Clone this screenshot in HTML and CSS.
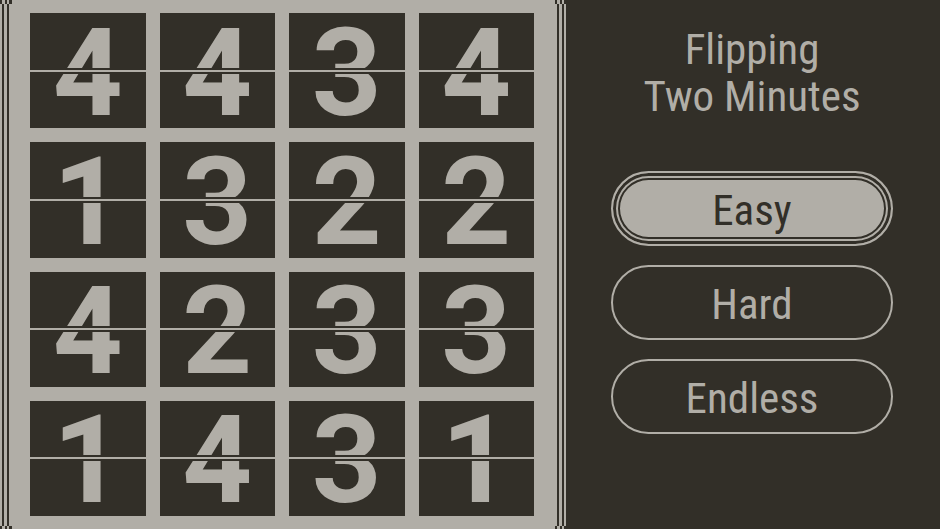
FILE: index.html
```html
<!DOCTYPE html>
<html lang="en">
<head>
    <meta charset="UTF-8">
    <meta name="viewport" content="width=device-width, initial-scale=1.0">
    <title>Flipping Two Minutes</title>
    <link rel="stylesheet" href="styles.css">
</head>
<body>
    <div class="game">
        <!-- Flip board -->
        <main class="board">
            <div class="tile">4</div>
            <div class="tile">4</div>
            <div class="tile">3</div>
            <div class="tile">4</div>

            <div class="tile">1</div>
            <div class="tile">3</div>
            <div class="tile">2</div>
            <div class="tile">2</div>

            <div class="tile">4</div>
            <div class="tile">2</div>
            <div class="tile">3</div>
            <div class="tile">3</div>

            <div class="tile">1</div>
            <div class="tile">4</div>
            <div class="tile">3</div>
            <div class="tile">1</div>
        </main>

        <!-- Title and mode menu -->
        <aside class="menu">
            <h1 class="title">Flipping<br>Two Minutes</h1>
            <div class="modes">
                <button type="button" class="mode selected">Easy</button>
                <button type="button" class="mode">Hard</button>
                <button type="button" class="mode">Endless</button>
            </div>
        </aside>
    </div>
</body>
</html>
```

FILE: styles.css
```css
:root {
    --light: #b1aea7;
    --dark: #322f28;
}

*,
*::after {
    box-sizing: border-box;
}

body {
    margin: 0;
    background: var(--dark);
    color: var(--light);
    font-family: "Roboto Condensed", "Open Sans Condensed", Lato, sans-serif;
}

.game {
    display: grid;
    grid-template-columns: minmax(0, 566fr) minmax(0, 374fr);
    min-height: 100vh;
}

/* Board, with two dark stripes down each side */
.board {
    --stripes: linear-gradient(to right, var(--dark) 2px, var(--light) 2px 5px, var(--dark) 5px 7px, var(--light) 7px);
    --ends: linear-gradient(to right, var(--dark) 2px, var(--light) 2px 5px, var(--dark) 5px 7px, var(--light) 7px 9px, var(--dark) 9px);
    display: grid;
    grid-template-columns: repeat(4, minmax(0, 1fr));
    grid-auto-rows: 1fr;
    gap: 14px;
    padding: 13px 32px 13px 30px;
    background:
        var(--ends) 0 0 / 12px 4px no-repeat,
        var(--ends) 0 100% / 12px 3px no-repeat,
        var(--ends) 100% 0 / 11px 4px no-repeat,
        var(--ends) 100% 100% / 11px 3px no-repeat,
        var(--stripes) 2px 0 / 9px 100% no-repeat,
        var(--stripes) 100% 0 / 9px 100% no-repeat,
        var(--light);
}

/* Flip tile */
.tile {
    position: relative;
    display: flex;
    justify-content: center;
    align-items: center;
    padding-top: 6px;
    background: var(--dark);
    font: 700 122px/108px Roboto, "Liberation Sans", sans-serif;
}

/* Hinge across the middle of the digit */
.tile::after {
    content: "";
    position: absolute;
    inset: 0;
    margin: auto 0;
    height: 6px;
    background: var(--light);
    border: solid var(--dark);
    border-width: 2px 0;
}

/* Menu */
.menu {
    display: flex;
    flex-direction: column;
    gap: 51px;
    padding: 26px 47px 26px 45px;
}

.title {
    margin: 0;
    font-size: 43px;
    font-weight: 400;
    line-height: 47px;
    text-align: center;
    white-space: nowrap;
}

.modes {
    display: flex;
    flex-direction: column;
    gap: 19px;
}

.mode {
    height: 75px;
    padding: 2px 0 0;
    border: 2px solid var(--light);
    border-radius: 38px;
    background: var(--dark);
    color: var(--light);
    font: inherit;
    font-size: 43px;
    cursor: pointer;
}

.mode.selected {
    background: var(--light);
    color: var(--dark);
    box-shadow:
        inset 0 0 0 3px var(--dark),
        inset 0 0 0 5px var(--light),
        inset 0 0 0 7px var(--dark);
}
```
